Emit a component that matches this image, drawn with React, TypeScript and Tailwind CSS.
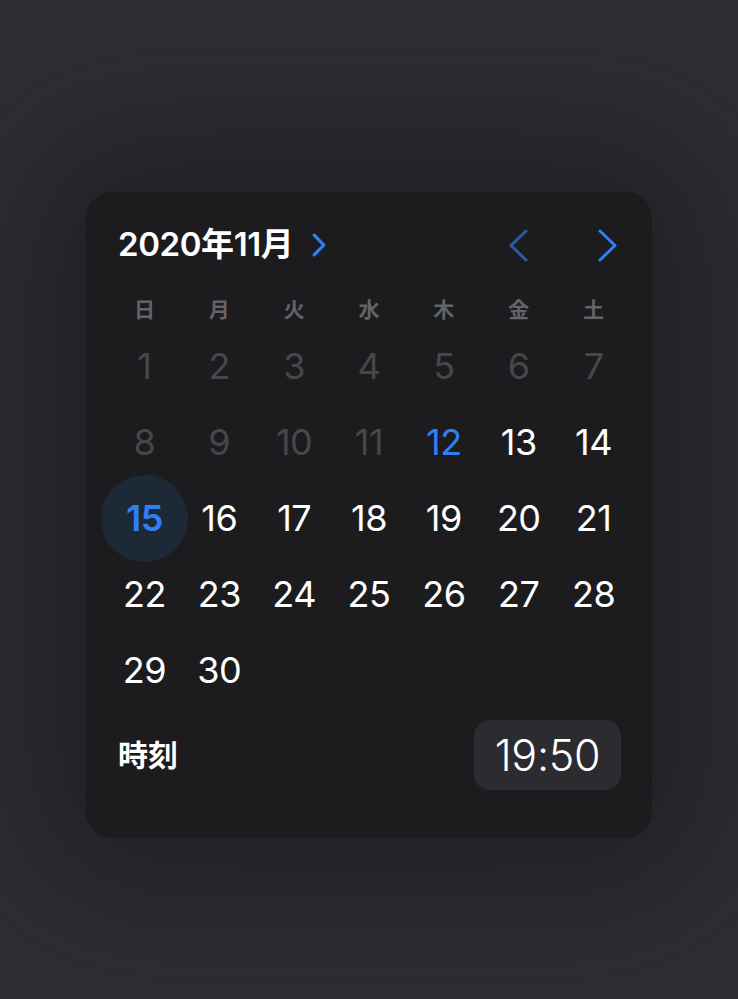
import React from "react";

const font = { fontFamily: 'Inter, "Noto Sans CJK JP", sans-serif' };

function Chevron({ dir, className, w, h, sw }: { dir: "l" | "r"; className: string; w: number; h: number; sw: number }) {
  const d = dir === "r" ? `M${sw} ${sw} L${w - sw} ${h / 2} L${sw} ${h - sw}` : `M${w - sw} ${sw} L${sw} ${h / 2} L${w - sw} ${h - sw}`;
  return (
    <svg width={w} height={h} viewBox={`0 0 ${w} ${h}`} className={className} fill="none">
      <path d={d} stroke="currentColor" strokeWidth={sw} strokeLinecap="round" strokeLinejoin="round" />
    </svg>
  );
}

export default function App() {
  const week = ["日", "月", "火", "水", "木", "金", "土"];
  const days = Array.from({ length: 30 }, (_, i) => i + 1);
  return (
    <div className="h-screen w-full bg-[#2e2f33] flex justify-center pt-[192px]" style={font}>
      <div className="w-[566px] h-[646px] bg-[#1c1c1e] rounded-[26px] shadow-[0_0_140px_50px_rgba(18,19,22,0.55)] flex flex-col">
        <div className="h-[44px] mt-[31px] pl-[32px] pr-[34px] flex items-center justify-between">
          <div className="flex items-center">
            <span className="text-white text-[33px] font-semibold tracking-[-0.4px]">2020年11月</span>
            <Chevron dir="r" w={16} h={26} sw={3.2} className="text-[#2f80f6] ml-[18px]" />
          </div>
          <div className="flex items-center gap-[68px]">
            <Chevron dir="l" w={21} h={35} sw={3} className="text-[#2a5ba6]" />
            <Chevron dir="r" w={21} h={35} sw={3} className="text-[#2f80f6]" />
          </div>
        </div>
        <div className="px-[21px] mt-[27px]">
          <div className="grid grid-cols-7 h-[30px] items-center">
            {week.map((w) => (
              <div key={w} className="text-center text-[21px] font-bold text-[#636368]">{w}</div>
            ))}
          </div>
          <div className="grid grid-cols-7 mt-[4px]">
            {days.map((d) => {
              const past = d < 12;
              const today = d === 12;
              const sel = d === 15;
              return (
                <div key={d} className="h-[76px] flex items-center justify-center relative">
                  {sel && <div className="absolute w-[87px] h-[87px] rounded-full bg-[#1e2938]" />}
                  <span
                    className={
                      "relative text-[36px] tracking-[-0.5px] " +
                      (sel ? "text-[#2f80f6] font-semibold" : today ? "text-[#2f80f6]" : past ? "text-[#47474b]" : "text-white")
                    }
                  >
                    {d}
                  </span>
                </div>
              );
            })}
          </div>
        </div>
        <div className="mt-[12px] pl-[32px] pr-[31px] flex items-center justify-between">
          <span className="text-white text-[30px] font-bold">時刻</span>
          <div className="w-[147px] h-[70px] rounded-[16px] bg-[#2c2c30] flex items-center justify-center">
            <span className="text-white text-[43px] font-light tracking-[-0.3px]">19:50</span>
          </div>
        </div>
      </div>
    </div>
  );
}
